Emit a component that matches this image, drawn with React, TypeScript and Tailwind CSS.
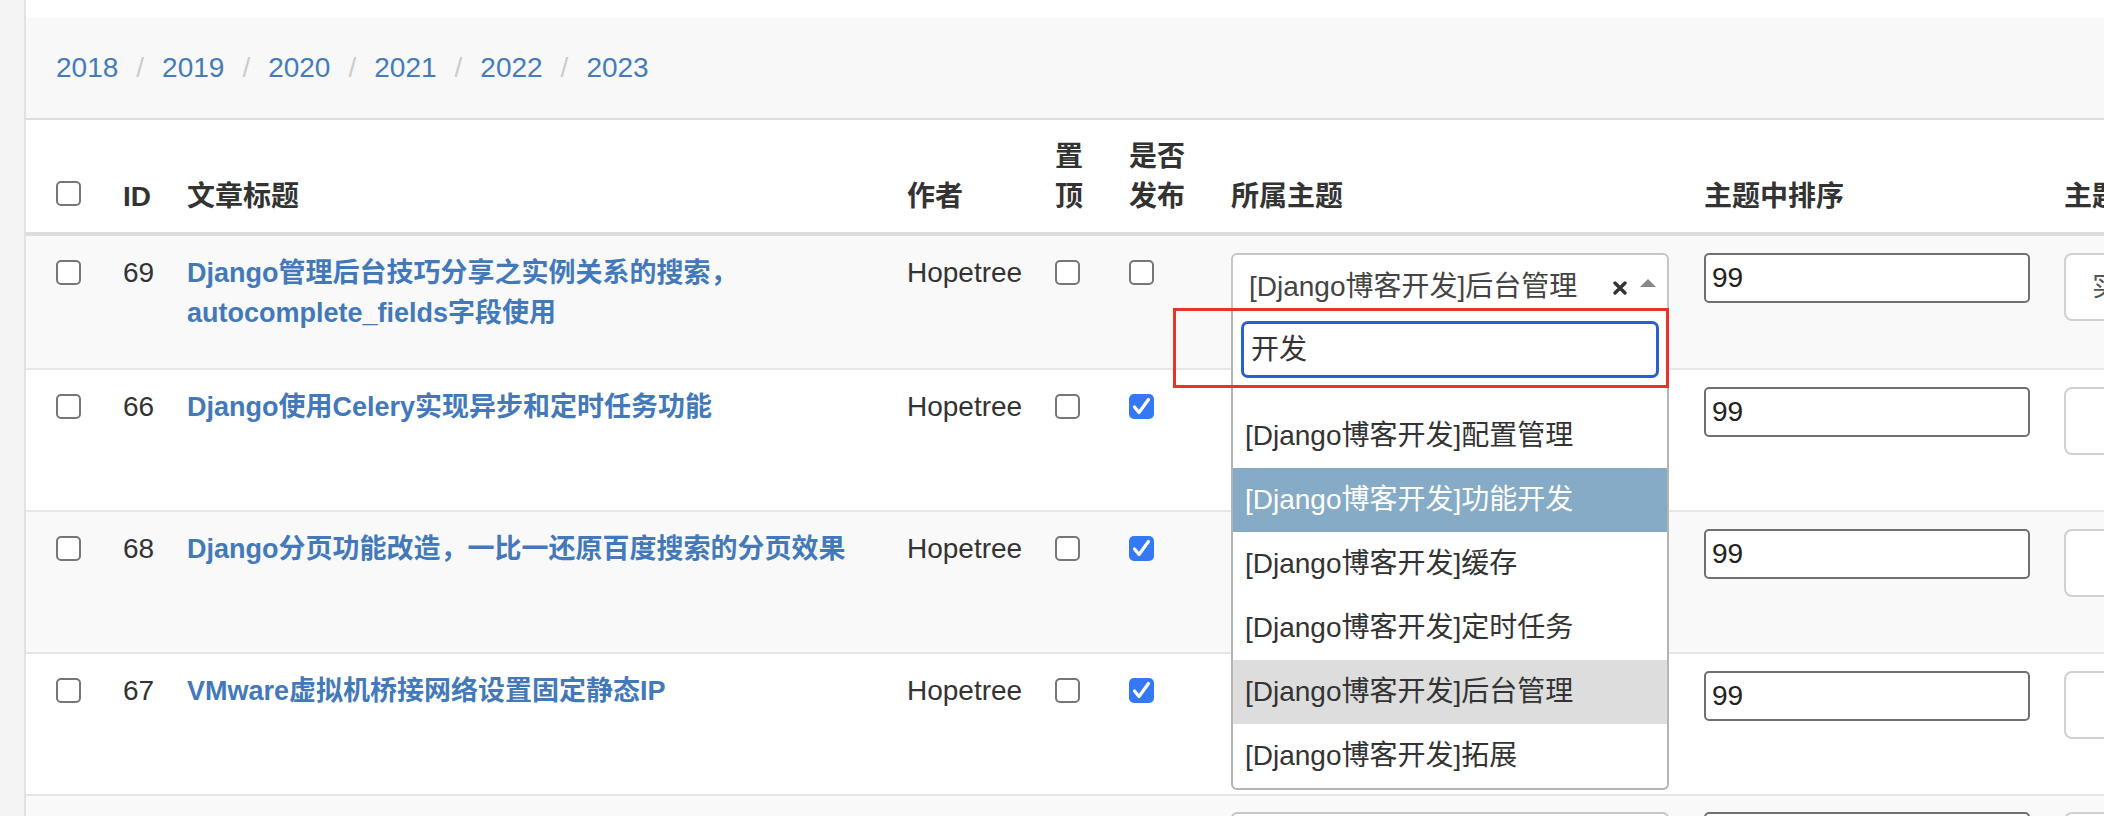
import React from 'react';

type Row = {
    id: number;
    title: string;
    pinned: boolean;
    published: boolean;
    topic: string;
    order: string;
    extra: string;
};

const ROWS: Row[] = [
    { id: 69, title: 'Django管理后台技巧分享之实例关系的搜索，autocomplete_fields字段使用', pinned: false, published: false, topic: '[Django博客开发]后台管理', order: '99', extra: '实例' },
    { id: 66, title: 'Django使用Celery实现异步和定时任务功能', pinned: false, published: true, topic: '', order: '99', extra: '' },
    { id: 68, title: 'Django分页功能改造，一比一还原百度搜索的分页效果', pinned: false, published: true, topic: '', order: '99', extra: '' },
    { id: 67, title: 'VMware虚拟机桥接网络设置固定静态IP', pinned: false, published: true, topic: '', order: '99', extra: '' },
];

const YEARS = ['2018', '2019', '2020', '2021', '2022', '2023'];

const OPTIONS = [
    '[Django博客开发]配置管理',
    '[Django博客开发]功能开发',
    '[Django博客开发]缓存',
    '[Django博客开发]定时任务',
    '[Django博客开发]后台管理',
    '[Django博客开发]拓展',
];

const COLS = 'grid grid-cols-[67px_64px_720px_148px_74px_102px_473px_360px_300px]';

const Checkbox = ({ checked = false }: { checked?: boolean }) =>
    checked ? (
        <div className="w-[25px] h-[25px] rounded-[5px] bg-[#3478f6] flex items-center justify-center">
            <svg viewBox="0 0 25 25" className="w-[25px] h-[25px]">
                <path d="M5.5 13 L10 18.5 L19.5 5.5" fill="none" stroke="white" strokeWidth="3.2" strokeLinecap="round" strokeLinejoin="round" />
            </svg>
        </div>
    ) : (
        <div className="w-[25px] h-[25px] rounded-[5px] border-2 border-[#767676] bg-white" />
    );

const TopicSelect = ({ label }: { label: string }) => (
    <div className="w-[438px] h-[68px] rounded-[6px] border-2 border-[#c6c6c6] bg-white flex items-center pl-[16px] pr-[11px] text-[#444]">
        <span className="flex-1 whitespace-nowrap overflow-hidden">{label}</span>
    </div>
);

const OpenSelect = ({ label }: { label: string }) => (
    <div className="relative w-[438px]">
        <div className="h-[68px] rounded-t-[6px] border-2 border-[#c6c6c6] bg-white flex items-center pl-[16px] pr-[11px] text-[#444]">
            <span className="flex-1 whitespace-nowrap">{label}</span>
            <svg viewBox="0 0 14 14" className="w-[14px] h-[14px] mt-[2px]">
                <path d="M2 2 L12 12 M12 2 L2 12" stroke="#333" strokeWidth="3.4" strokeLinecap="round" />
            </svg>
            <svg viewBox="0 0 16 8" className="w-[16px] h-[8px] ml-[13px] mt-[-8px]">
                <path d="M0 8 L8 0 L16 8 Z" fill="#888" />
            </svg>
        </div>

        {/* dropdown */}
        <div className="absolute left-0 top-[58px] w-[438px] z-20 bg-white border-2 border-t-0 border-[#b4b4b4] rounded-b-[6px]">
            <div className="pt-[10px] px-[8px] pb-[26px]">
                <div className="h-[57px] border-[3px] border-[#2a5ecb] rounded-[7px] flex items-center pl-[7px] text-[#333]">开发</div>
            </div>
            {OPTIONS.map((opt, i) => (
                <div
                    key={opt}
                    className={`h-[64px] flex items-center pl-[12px] whitespace-nowrap ${
                        i === 1 ? 'bg-[#85abc6] text-white' : i === 4 ? 'bg-[#dddddd] text-[#333]' : 'text-[#333]'
                    }`}
                >
                    {opt}
                </div>
            ))}
        </div>

        {/* highlight box */}
        <div className="absolute left-[-58px] top-[55px] w-[496px] h-[80px] z-30 border-[3px] border-[#e5352b]" />
    </div>
);

const OrderInput = ({ value }: { value: string }) => (
    <div className="w-[326px] h-[50px] rounded-[5px] border-2 border-[#707070] bg-white flex items-center pl-[6px] text-[#222]">{value}</div>
);

const ExtraBox = ({ value }: { value: string }) => (
    <div className="w-[300px] h-[68px] rounded-[8px] border-2 border-[#d0d0d0] bg-white flex items-center pl-[26px] text-[#555]">{value}</div>
);

export default function App() {
    return (
        <div className="flex w-[2104px] h-[816px] overflow-hidden bg-white text-[28px] font-['Liberation_Sans','Noto_Sans_CJK_SC',sans-serif]">
            <div className="w-[26px] shrink-0 bg-[#f4f4f4] border-r-2 border-[#e2e2e2]" />

            <div className="flex-1 min-w-0 overflow-hidden">
                <div className="h-[18px]" />

                {/* date hierarchy */}
                <div className="h-[102px] bg-[#f8f8f8] border-b-2 border-[#dddddd] flex items-center pl-[30px] text-[#447cba]">
                    {YEARS.map((y, i) => (
                        <React.Fragment key={y}>
                            {i > 0 && <span className="mx-[18px] text-[#cccccc]">/</span>}
                            <span>{y}</span>
                        </React.Fragment>
                    ))}
                </div>

                {/* header */}
                <div className={`${COLS} h-[116px] border-b-4 border-[#dddddd] pl-[30px] items-end pb-[15px] font-bold text-[#333] leading-[40px]`}>
                    <div className="pb-[11px]"><Checkbox /></div>
                    <div>ID</div>
                    <div>文章标题</div>
                    <div>作者</div>
                    <div><div>置</div><div>顶</div></div>
                    <div><div>是否</div><div>发布</div></div>
                    <div>所属主题</div>
                    <div>主题中排序</div>
                    <div className="whitespace-nowrap">主题</div>
                </div>

                {/* rows */}
                {ROWS.map((row, i) => (
                    <div
                        key={row.id}
                        className={`${COLS} ${i === 0 ? 'h-[134px]' : 'h-[142px]'} border-b-2 border-[#e6e6e6] pl-[30px] pt-[17px] items-start leading-[40px] ${
                            i % 2 === 0 ? 'bg-[#f9f9f9]' : 'bg-white'
                        }`}
                    >
                        <div className="pt-[7px]"><Checkbox /></div>
                        <div className="text-[#333]">{row.id}</div>
                        <div className="pr-[20px] font-bold text-[27px] text-[#4479b9]">{row.title}</div>
                        <div className="text-[#333]">Hopetree</div>
                        <div className="pt-[7px]"><Checkbox checked={row.pinned} /></div>
                        <div className="pt-[7px]"><Checkbox checked={row.published} /></div>
                        <div>{i === 0 ? <OpenSelect label={row.topic} /> : <TopicSelect label={row.topic} />}</div>
                        <div><OrderInput value={row.order} /></div>
                        <div><ExtraBox value={row.extra} /></div>
                    </div>
                ))}

                {/* next row, only its top edge is visible */}
                <div className={`${COLS} h-[142px] pl-[30px] pt-[16px] items-start bg-[#f9f9f9]`}>
                    <div />
                    <div />
                    <div />
                    <div />
                    <div />
                    <div />
                    <div><TopicSelect label="" /></div>
                    <div><OrderInput value="" /></div>
                    <div><ExtraBox value="" /></div>
                </div>
            </div>
        </div>
    );
}
